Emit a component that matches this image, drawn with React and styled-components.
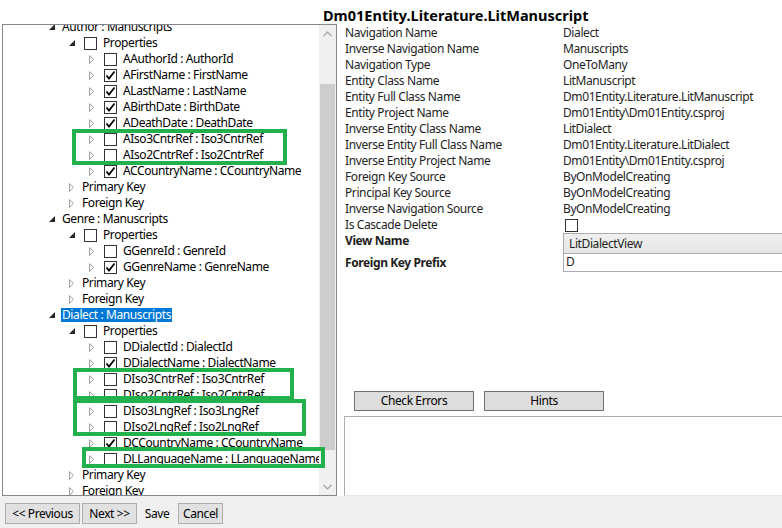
import React from 'react';
import styled, { createGlobalStyle } from 'styled-components';

const GlobalStyle = createGlobalStyle`
  html, body {
    margin: 0;
    padding: 0;
    background: #ffffff;
  }
  body {
    font-family: "Noto Sans", "Liberation Sans", sans-serif;
    font-size: 12px;
    letter-spacing: -0.4px;
    color: #000000;
  }
`;

const Window = styled.div`
  position: relative;
  width: 782px;
  height: 528px;
  overflow: hidden;
  display: flex;
  flex-direction: column;
  background: #ffffff;
`;

const Title = styled.div`
  height: 24px;
  box-sizing: border-box;
  padding: 6px 0 0 323px;
  font-size: 14.5px;
  font-weight: bold;
  letter-spacing: 0;
  line-height: 18px;
  white-space: nowrap;
`;

const Body = styled.div`
  display: flex;
  height: 472px;
`;

/* ---- tree ---- */

const TreeBox = styled.div`
  margin-left: 2px;
  width: 335px;
  box-sizing: border-box;
  border: 1px solid #828790;
  display: flex;
  overflow: hidden;
  background: #ffffff;
`;

const TreeViewport = styled.div`
  flex: 1;
  overflow: hidden;
`;

const TreeList = styled.div`
  margin-top: -6px;
`;

const Row = styled.div`
  display: flex;
  align-items: center;
  height: 16px;
  padding-left: ${p => 39 + p.$level * 20}px;
  white-space: nowrap;
`;

const Expander = styled.span`
  width: 19px;
  height: 16px;
  display: flex;
  align-items: center;
  justify-content: center;
  flex: none;
`;

const Header = styled.span`
  display: flex;
  align-items: center;
  height: 14px;
  padding: 0 1px;
  line-height: 14px;
  background: ${p => (p.$selected ? '#0078d7' : 'transparent')};
  color: ${p => (p.$selected ? '#ffffff' : '#000000')};
`;

const Box = styled.span`
  width: 13px;
  height: 13px;
  box-sizing: border-box;
  border: 1px solid #333333;
  background: #ffffff;
  display: flex;
  align-items: center;
  justify-content: center;
  margin: ${p => p.$margin || '0 5px 0 3px'};
  flex: none;
`;

const ScrollBar = styled.div`
  width: 17px;
  background: #f0f0f0;
  display: flex;
  flex-direction: column;
  flex: none;
`;

const ScrollArrow = styled.div`
  height: 17px;
  display: flex;
  align-items: center;
  justify-content: center;
  flex: none;
`;

const ScrollTrack = styled.div`
  flex: 1;
`;

const Thumb = styled.div`
  margin: 42px 1px 0 1px;
  height: 366px;
  background: #cdcdcd;
`;

/* ---- right panel ---- */

const Panel = styled.div`
  flex: 1;
  display: flex;
  flex-direction: column;
  padding-top: 1px;
  min-width: 0;
`;

const Grid = styled.div`
  padding-left: 8px;
  display: grid;
  grid-template-columns: 218px 1fr;
`;

const Label = styled.div`
  height: ${p => p.$h || 16}px;
  line-height: 16px;
  color: #1e1e1e;
  font-weight: ${p => (p.$bold ? 'bold' : 'normal')};
  white-space: nowrap;
  padding-top: ${p => p.$pt || 0}px;
  box-sizing: border-box;
`;

const Value = styled.div`
  height: ${p => p.$h || 16}px;
  line-height: 16px;
  color: #1e1e1e;
  white-space: nowrap;
  display: flex;
  align-items: center;
`;

const Combo = styled.div`
  width: 240px;
  height: 21px;
  box-sizing: border-box;
  border: 1px solid #acacac;
  background: linear-gradient(#f0f0f0, #e5e5e5);
  padding-left: 5px;
  line-height: 19px;
  flex: none;
`;

const TextBox = styled.div`
  width: 240px;
  height: 18px;
  box-sizing: border-box;
  border: 1px solid #abadb3;
  border-top: none;
  background: #ffffff;
  padding-left: 2px;
  line-height: 16px;
  flex: none;
`;

const Spacer = styled.div`
  flex: 1;
`;

const ActionRow = styled.div`
  display: flex;
  gap: 10px;
  padding-left: 17px;
`;

const ActionButton = styled.div`
  width: 120px;
  height: 20px;
  box-sizing: border-box;
  border: 1px solid #707070;
  background: #dddddd;
  text-align: center;
  line-height: 18px;
`;

const Output = styled.div`
  margin: 5px 0 0 7px;
  width: 460px;
  height: 80px;
  box-sizing: border-box;
  border: 1px solid #abadb3;
  border-bottom-color: #e3e9ef;
  background: #ffffff;
`;

/* ---- bottom bar ---- */

const Footer = styled.div`
  height: 32px;
  background: #f0f0f0;
  display: flex;
  align-items: flex-start;
  padding: 7px 0 0 5px;
  box-sizing: border-box;
`;

const NavButton = styled.div`
  width: ${p => p.$w}px;
  height: 21px;
  box-sizing: border-box;
  border: 1px solid ${p => (p.$flat ? 'transparent' : '#adadad')};
  background: ${p => (p.$flat ? 'transparent' : '#e1e1e1')};
  margin-right: ${p => p.$mr || 2}px;
  text-align: center;
  line-height: 19px;
  white-space: nowrap;
`;

const Mark = styled.div`
  position: absolute;
  left: ${p => p.$x}px;
  top: ${p => p.$y}px;
  width: ${p => p.$w}px;
  height: ${p => p.$h}px;
  box-sizing: border-box;
  border: 4px solid #22b14c;
  pointer-events: none;
`;

const OpenGlyph = () => (
  <svg width="6" height="6" viewBox="0 0 6 6">
    <path d="M0 6 L6 6 L6 0 Z" fill="#262626" />
  </svg>
);

const ClosedGlyph = () => (
  <svg width="6" height="9" viewBox="0 0 6 9">
    <path d="M0.5 0.5 L4.5 4.5 L0.5 8.5 Z" fill="none" stroke="#a0a0a0" />
  </svg>
);

const Tick = () => (
  <svg width="11" height="11" viewBox="0 0 11 11">
    <path d="M1.5 5.5 L4 8.5 L9.5 1.5" fill="none" stroke="#000" strokeWidth="1.8" />
  </svg>
);

const Chevron = ({ up }) => (
  <svg width="9" height="6" viewBox="0 0 9 6">
    <path d={up ? 'M0.5 5 L4.5 1 L8.5 5' : 'M0.5 1 L4.5 5 L8.5 1'} fill="none" stroke="#a3a3a3" strokeWidth="1.2" />
  </svg>
);

const tree = [
  [0, 'open', null, 'Author : Manuscripts'],
  [1, 'open', false, 'Properties'],
  [2, 'closed', false, 'AAuthorId : AuthorId'],
  [2, 'closed', true, 'AFirstName : FirstName'],
  [2, 'closed', true, 'ALastName : LastName'],
  [2, 'closed', true, 'ABirthDate : BirthDate'],
  [2, 'closed', true, 'ADeathDate : DeathDate'],
  [2, 'closed', false, 'AIso3CntrRef : Iso3CntrRef'],
  [2, 'closed', false, 'AIso2CntrRef : Iso2CntrRef'],
  [2, 'closed', true, 'ACCountryName : CCountryName'],
  [1, 'closed', null, 'Primary Key'],
  [1, 'closed', null, 'Foreign Key'],
  [0, 'open', null, 'Genre : Manuscripts'],
  [1, 'open', false, 'Properties'],
  [2, 'closed', false, 'GGenreId : GenreId'],
  [2, 'closed', true, 'GGenreName : GenreName'],
  [1, 'closed', null, 'Primary Key'],
  [1, 'closed', null, 'Foreign Key'],
  [0, 'open', null, 'Dialect : Manuscripts', true],
  [1, 'open', false, 'Properties'],
  [2, 'closed', false, 'DDialectId : DialectId'],
  [2, 'closed', true, 'DDialectName : DialectName'],
  [2, 'closed', false, 'DIso3CntrRef : Iso3CntrRef'],
  [2, 'closed', false, 'DIso2CntrRef : Iso2CntrRef'],
  [2, 'closed', false, 'DIso3LngRef : Iso3LngRef'],
  [2, 'closed', false, 'DIso2LngRef : Iso2LngRef'],
  [2, 'closed', true, 'DCCountryName : CCountryName'],
  [2, 'closed', false, 'DLLanguageName : LLanguageName'],
  [1, 'closed', null, 'Primary Key'],
  [1, 'closed', null, 'Foreign Key'],
];

const props = [
  ['Navigation Name', 'Dialect'],
  ['Inverse Navigation Name', 'Manuscripts'],
  ['Navigation Type', 'OneToMany'],
  ['Entity Class Name', 'LitManuscript'],
  ['Entity Full Class Name', 'Dm01Entity.Literature.LitManuscript'],
  ['Entity Project Name', 'Dm01Entity\\Dm01Entity.csproj'],
  ['Inverse Entity Class Name', 'LitDialect'],
  ['Inverse Entity Full Class Name', 'Dm01Entity.Literature.LitDialect'],
  ['Inverse Entity Project Name', 'Dm01Entity\\Dm01Entity.csproj'],
  ['Foreign Key Source', 'ByOnModelCreating'],
  ['Principal Key Source', 'ByOnModelCreating'],
  ['Inverse Navigation Source', 'ByOnModelCreating'],
];

function TreeRow({ level, state, check, label, selected }) {
  return (
    <Row $level={level}>
      <Expander>{state === 'open' ? <OpenGlyph /> : <ClosedGlyph />}</Expander>
      {check !== null && <Box>{check && <Tick />}</Box>}
      <Header $selected={selected}>{label}</Header>
    </Row>
  );
}

export default function App() {
  return (
    <Window>
      <GlobalStyle />
      <Title>Dm01Entity.Literature.LitManuscript</Title>
      <Body>
        <TreeBox>
          <TreeViewport>
            <TreeList>
              {tree.map(([level, state, check, label, selected], i) => (
                <TreeRow key={i} level={level} state={state} check={check} label={label} selected={selected} />
              ))}
            </TreeList>
          </TreeViewport>
          <ScrollBar>
            <ScrollArrow><Chevron up /></ScrollArrow>
            <ScrollTrack><Thumb /></ScrollTrack>
            <ScrollArrow><Chevron /></ScrollArrow>
          </ScrollBar>
        </TreeBox>
        <Panel>
          <Grid>
            {props.map(([k, v]) => (
              <React.Fragment key={k}>
                <Label>{k}</Label>
                <Value>{v}</Value>
              </React.Fragment>
            ))}
            <Label>Is Cascade Delete</Label>
            <Value><Box $margin="0 0 0 2px" /></Value>
            <Label $bold $h={21} $pt={0}>View Name</Label>
            <Value $h={21}><Combo>LitDialectView</Combo></Value>
            <Label $bold $h={18} $pt={1}>Foreign Key Prefix</Label>
            <Value $h={18}><TextBox>D</TextBox></Value>
          </Grid>
          <Spacer />
          <ActionRow>
            <ActionButton>Check Errors</ActionButton>
            <ActionButton>Hints</ActionButton>
          </ActionRow>
          <Output />
        </Panel>
      </Body>
      <Footer>
        <NavButton $w={75}>&lt;&lt; Previous</NavButton>
        <NavButton $w={55} $mr={2}>Next &gt;&gt;</NavButton>
        <NavButton $w={36} $flat $mr={3}>Save</NavButton>
        <NavButton $w={45}>Cancel</NavButton>
      </Footer>
      <Mark $x={72} $y={129} $w={215} $h={36} />
      <Mark $x={73} $y={368} $w={221} $h={32} />
      <Mark $x={73} $y={399} $w={233} $h={37} />
      <Mark $x={82} $y={447} $w={243} $h={21} />
    </Window>
  );
}
